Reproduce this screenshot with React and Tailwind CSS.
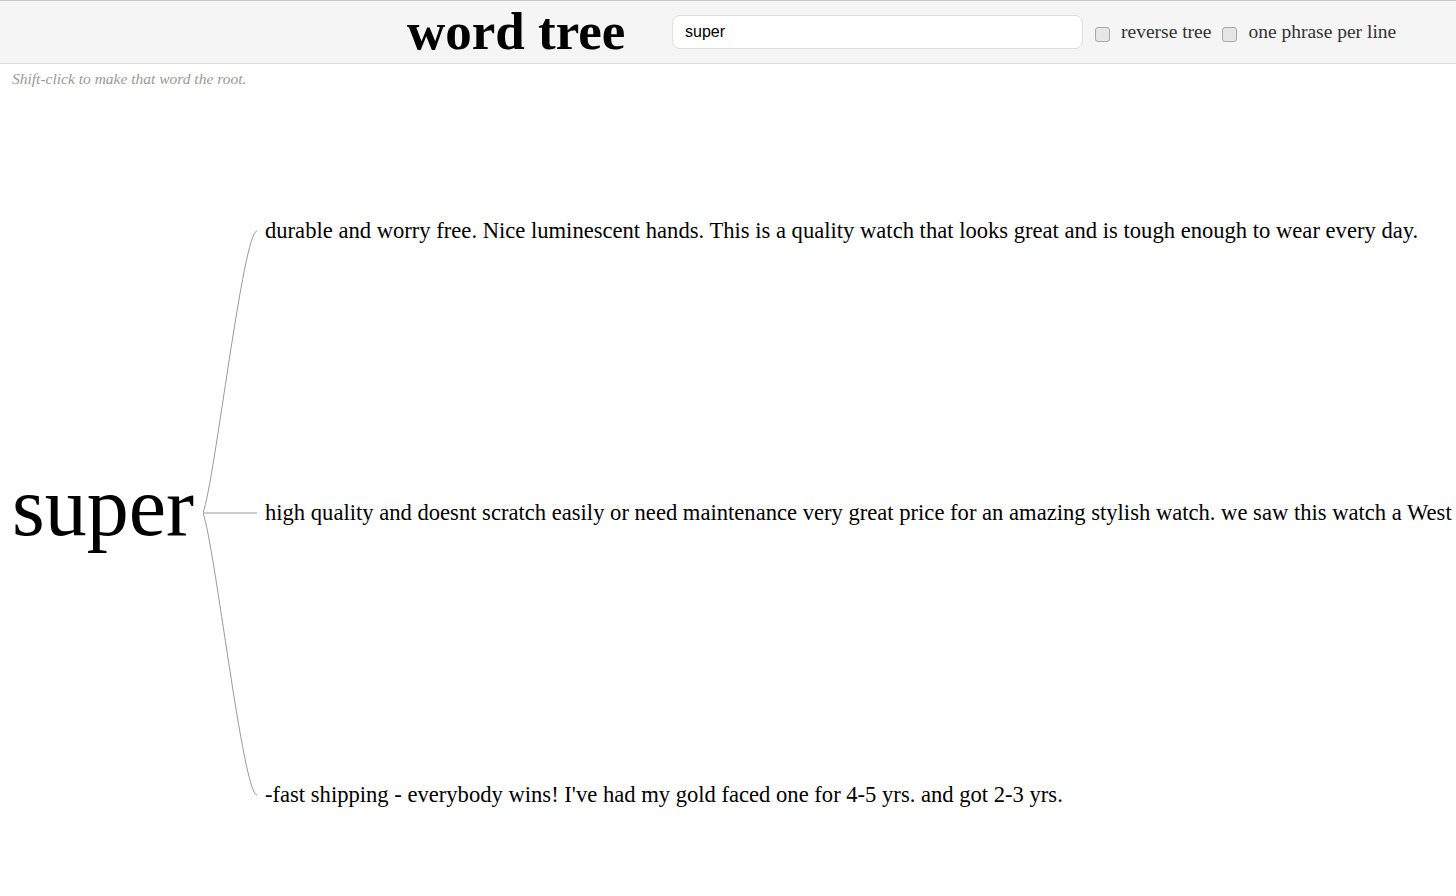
const branches = [
    "durable and worry free. Nice luminescent hands. This is a quality watch that looks great and is tough enough to wear every day.",
    "high quality and doesnt scratch easily or need maintenance very great price for an amazing stylish watch. we saw this watch a West",
    "-fast shipping - everybody wins! I've had my gold faced one for 4-5 yrs. and got 2-3 yrs.",
];

const serif = { fontFamily: '"Liberation Serif", "Times New Roman", serif' };

const Checkbox = ({ label }) => (
    <label className="flex items-center gap-[11px] text-[19.5px] text-[#333]">
        <input
            type="checkbox"
            className="appearance-none mt-[5px] w-[15px] h-[15px] rounded-[3px] border border-[#a9a9a9] bg-[#e6e6e6]"
        />
        <span>{label}</span>
    </label>
);

const App = () => {
    return (
        <div className="w-full h-[896px] overflow-hidden bg-white text-black" style={serif}>
            <header className="h-[64px] flex items-center bg-[#f5f5f5] border-t border-[#c6c6c6] border-b border-b-[#dcdcdc]">
                <h1 className="ml-[407px] w-[265px] shrink-0 mb-[2px] text-[53px] font-bold leading-none">word tree</h1>
                <input
                    type="text"
                    defaultValue="super"
                    className="w-[411px] h-[34px] shrink-0 px-3 rounded-lg border border-[#dedede] bg-white text-[16px] text-black outline-none"
                    style={{ fontFamily: '"Liberation Sans", Arial, sans-serif' }}
                />
                <div className="ml-3 flex items-center gap-[11px] whitespace-nowrap">
                    <Checkbox label="reverse tree" />
                    <Checkbox label="one phrase per line" />
                </div>
            </header>

            <div className="h-[30px] pl-3 leading-[30px] text-[15.5px] italic text-[#999]">
                Shift-click to make that word the root.
            </div>

            <section className="mt-[127px] flex items-center">
                <div className="ml-3 w-[191px] shrink-0 pb-[13px] text-[84px] leading-none">super</div>
                <svg width="54" height="584" className="shrink-0" fill="none" stroke="#9a9a9a" strokeWidth="1">
                    <path d="M0 292 C 12 259 40 10 54 10" />
                    <path d="M0 292 L 54 292" />
                    <path d="M0 292 C 12 325 40 574 54 574" />
                </svg>
                <div className="ml-2 h-[584px] shrink-0 flex flex-col justify-between whitespace-nowrap text-[22.6px]">
                    {branches.map((text, index) => (
                        <div key={index} className="h-[20px] leading-[20px]">{text}</div>
                    ))}
                </div>
            </section>
        </div>
    );
};

export default App;
